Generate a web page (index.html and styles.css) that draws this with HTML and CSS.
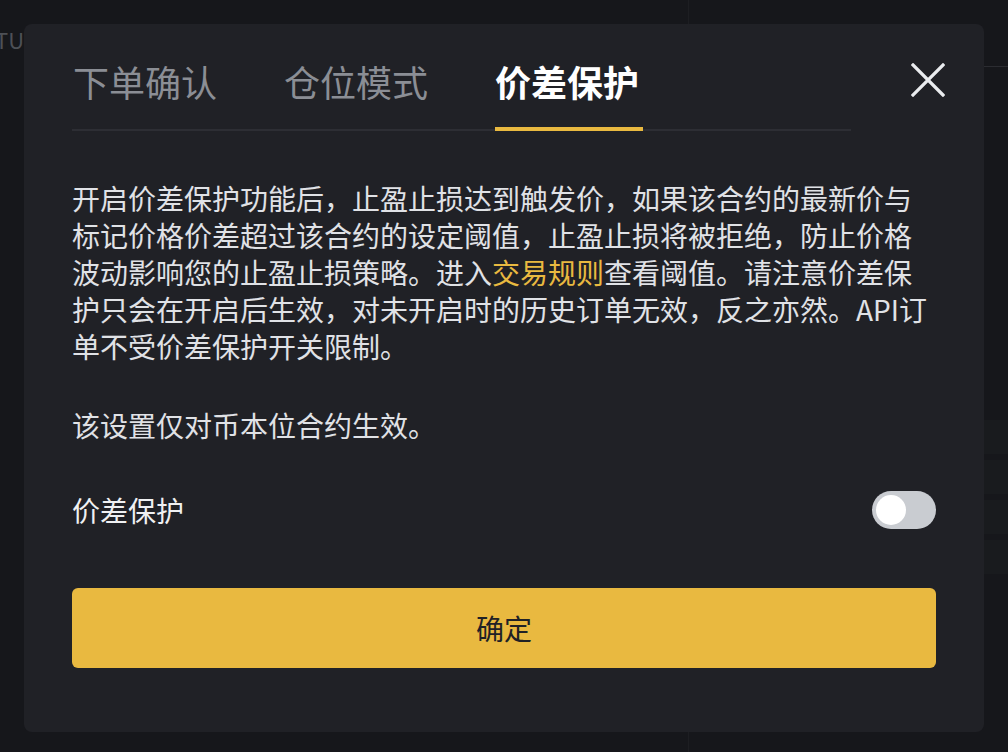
FILE: index.html
```html
<!DOCTYPE html>
<html lang="zh-CN">
<head>
<meta charset="utf-8">
<title>价差保护</title>
<link rel="stylesheet" href="styles.css">
</head>
<body>

<div class="app">
	<div class="app-main">
		<div class="symbol">TUD</div>
	</div>
	<div class="app-side">
		<div class="side-bar"></div>
		<ul class="side-rows">
			<li></li>
			<li></li>
			<li></li>
			<li></li>
		</ul>
	</div>
</div>

<div class="overlay">
	<div class="modal">
		<div class="modal-head">
			<div class="tabs">
				<span class="tab">下单确认</span>
				<span class="tab">仓位模式</span>
				<span class="tab active">价差保护</span>
			</div>
			<button class="close" aria-label="关闭">
				<svg width="34" height="34" viewBox="0 0 34 34"><path d="M2 2L32 32M32 2L2 32" stroke="#eaecef" stroke-width="3.2" stroke-linecap="square"/></svg>
			</button>
		</div>

		<p class="desc">开启价差保护功能后，止盈止损达到触发价，如果该合约的最新价与标记价格价差超过该合约的设定阈值，止盈止损将被拒绝，防止价格波动影响您的止盈止损策略。进入<a href="#">交易规则</a>查看阈值。请注意价差保护只会在开启后生效，对未开启时的历史订单无效，反之亦然。API订单不受价差保护开关限制。</p>

		<p class="desc note">该设置仅对币本位合约生效。</p>

		<div class="switch-row">
			<span class="switch-label">价差保护</span>
			<span class="switch"><span class="knob"></span></span>
		</div>

		<button class="confirm">确定</button>
	</div>
</div>

</body>
</html>
```

FILE: styles.css
```css
html, body {
	margin: 0;
	height: 100%;
}

body {
	background: #16171b;
	font-family: "Noto Sans CJK SC", "Noto Sans", sans-serif;
	overflow: hidden;
}

/* underlying page, dimmed behind the dialog */
.app {
	display: grid;
	grid-template-columns: 688px 1fr;
	height: 752px;
}

.app-main {
	padding-top: 26px;
}

.symbol {
	margin-left: -5px;
	color: #4d5056;
	font-size: 22px;
	line-height: 26px;
}

.app-side {
	border-left: 1px solid #1d1e22;
	padding-top: 66px;
}

.side-bar {
	height: 1px;
	background: #2b2c31;
}

.side-rows {
	list-style: none;
	margin: 353px 0 0;
	padding: 0;
}

.side-rows li {
	height: 34px;
	margin-bottom: 6px;
	background: #191b1e;
}

/* dialog */
.overlay {
	position: fixed;
	top: 0;
	left: 0;
	right: 0;
	bottom: 0;
	padding: 24px;
}

.modal {
	width: 960px;
	height: 708px;
	box-sizing: border-box;
	padding: 31px 48px 0;
	background: #202126;
	border-radius: 8px;
}

.modal-head {
	display: flex;
	align-items: flex-start;
	justify-content: space-between;
}

.tabs {
	display: flex;
	gap: 67px;
	width: 778px;
	padding-left: 1px;
	border-bottom: 2px solid #2d2e34;
}

.tab {
	font-size: 36px;
	line-height: 52px;
	padding-bottom: 20px;
	color: #8b8e95;
	border-bottom: 4px solid transparent;
	margin-bottom: -2px;
}

.tab.active {
	color: #ffffff;
	font-weight: bold;
	border-bottom-color: #e9b940;
	padding-right: 4px;
}

.close {
	margin-top: 8px;
	margin-right: -9px;
	padding: 0;
	border: 0;
	background: none;
	width: 34px;
	height: 34px;
}

.desc {
	margin: 49px 0 0;
	color: #e0e2e6;
	font-size: 28px;
	line-height: 37px;
}

.desc a {
	color: #e9b940;
	text-decoration: none;
}

.desc.note {
	margin-top: 42px;
}

.switch-row {
	display: flex;
	align-items: center;
	justify-content: space-between;
	margin-top: 47px;
}

.switch-label {
	color: #eff0f2;
	font-size: 28px;
	line-height: 38px;
}

.switch {
	display: flex;
	align-items: center;
	width: 64px;
	height: 38px;
	box-sizing: border-box;
	padding-left: 4px;
	border-radius: 19px;
	background: #c9ccd1;
}

.knob {
	width: 30px;
	height: 30px;
	border-radius: 50%;
	background: #ffffff;
}

.confirm {
	display: block;
	width: 100%;
	height: 80px;
	margin-top: 59px;
	border: 0;
	border-radius: 6px;
	background: #e9b940;
	color: #202126;
	font-family: inherit;
	font-size: 28px;
}
```
